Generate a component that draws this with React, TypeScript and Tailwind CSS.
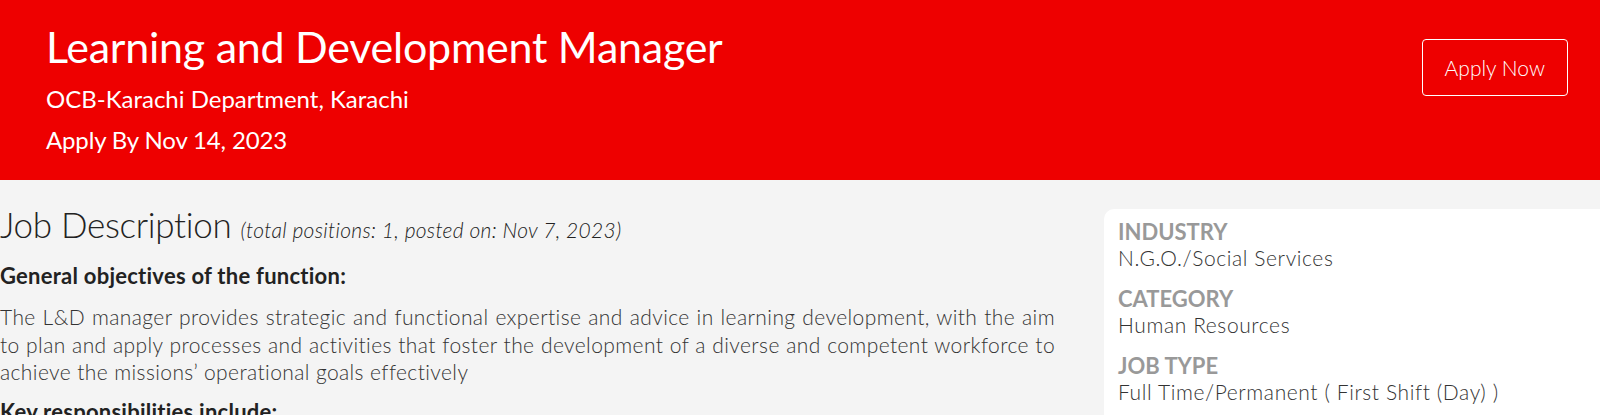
import React from 'react';

const details = [
  { label: 'INDUSTRY', value: 'N.G.O./Social Services' },
  { label: 'CATEGORY', value: 'Human Resources' },
  { label: 'JOB TYPE', value: 'Full Time/Permanent ( First Shift (Day) )' },
];

const App: React.FC = () => {
  return (
    <div className="min-h-screen overflow-hidden bg-[#f4f4f4] font-['Lato','Liberation_Sans',sans-serif]">
      {/* Header */}
      <div className="flex h-[180px] items-start justify-between bg-[#ee0000] pl-[46px] pr-[32px] text-white">
        <div className="pt-[20px]">
          <h1 className="text-[43px] leading-[53px] font-normal tracking-[-0.25px]">Learning and Development Manager</h1>
          <div className="mt-[5px] text-[24px] leading-[41px]">OCB-Karachi Department, Karachi</div>
          <div className="text-[24px] leading-[41px] tracking-[-0.15px]">Apply By Nov 14, 2023</div>
        </div>
        <button className="mt-[39px] h-[57px] rounded-[4px] border border-white px-[22px] text-[21px] font-light text-white">
          Apply Now
        </button>
      </div>

      {/* Body */}
      <div className="flex gap-[49px]">
        <div className="w-[1055px] shrink-0 pt-[22px]">
          <h2 className="text-[35px] leading-[44px] font-light tracking-[-0.3px] text-[#222]">
            Job Description{' '}
            <span className="text-[21px] font-light italic tracking-[0.3px]">(total positions: 1, posted on: Nov 7, 2023)</span>
          </h2>
          <h3 className="mt-[10px] text-[22px] leading-[28px] font-bold tracking-[0.25px] text-[#222]">
            General objectives of the function:
          </h3>
          <p className="mt-[13px] text-justify text-[21px] leading-[27.5px] font-light tracking-[0.4px] text-[#333]">
            The L&amp;D manager provides strategic and functional expertise and advice in learning development, with the aim
            to plan and apply processes and activities that foster the development of a diverse and competent workforce to
            achieve the missions’ operational goals effectively
          </p>
          <h3 className="mt-[12px] text-[22px] leading-[28px] font-bold tracking-[0.25px] text-[#222]">
            Key responsibilities include:
          </h3>
        </div>

        <div className="mt-[29px] w-[560px] shrink-0 rounded-tl-[10px] bg-white px-[14px] pt-[10px]">
          {details.map((d) => (
            <div key={d.label} className="mb-[15px]">
              <div className="text-[22px] leading-[26px] font-bold text-[#999]">{d.label}</div>
              <div className="text-[21px] leading-[26px] font-light tracking-[0.6px] text-[#333]">{d.value}</div>
            </div>
          ))}
        </div>
      </div>
    </div>
  );
};

export default App;
